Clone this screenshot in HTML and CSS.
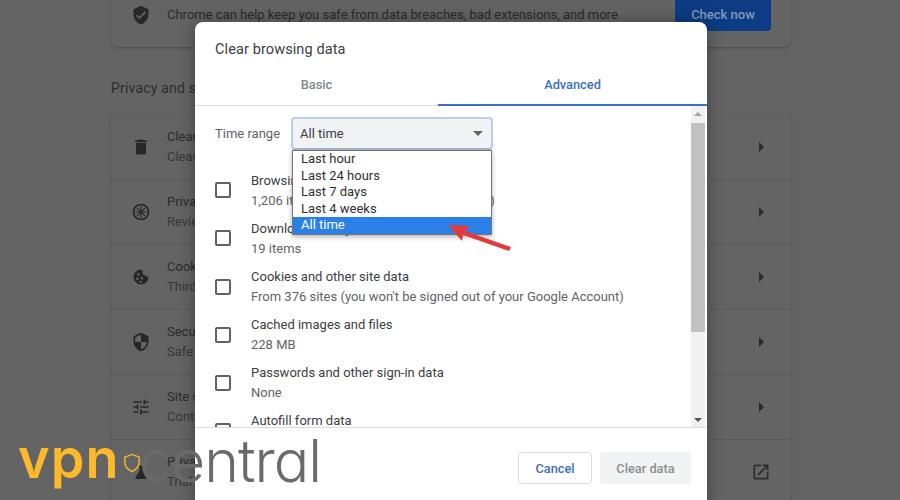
FILE: index.html
```html
<!DOCTYPE html>
<html lang="en">
<head>
<meta charset="utf-8">
<title>Clear browsing data</title>
<link rel="stylesheet" href="styles.css">
</head>
<body>
<main class="page">
  <section class="card">
    <div class="row">
      <svg class="icon" viewBox="0 0 24 24"><path d="M12 1L3 5v6c0 5.55 3.84 10.74 9 12 5.16-1.26 9-6.45 9-12V5l-9-4zm-2 16l-4-4 1.41-1.41L10 14.17l6.59-6.59L18 9l-8 8z"/></svg>
      <div class="row-text"><div class="line-main">Chrome can help keep you safe from data breaches, bad extensions, and more</div></div>
      <button class="check">Check now</button>
    </div>
  </section>
  <h2 class="section-title">Privacy and security</h2>
  <section class="card">
    <div class="row">
      <svg class="icon" viewBox="0 0 24 24"><path d="M6 19c0 1.1.9 2 2 2h8c1.1 0 2-.9 2-2V7H6v12zM19 4h-3.5l-1-1h-5l-1 1H5v2h14V4z"/></svg>
      <div class="row-text"><div class="line-main">Clear browsing data</div><div class="line-sub">Clear history, cookies, cache, and more</div></div>
      <span class="chev"></span>
    </div>
    <div class="row">
      <svg class="icon" viewBox="0 0 24 24"><path d="M12 2a10 10 0 1 0 0 20 10 10 0 0 0 0-20zm0 2a8 8 0 1 1 0 16 8 8 0 0 1 0-16z"/><path d="M11.3 5h1.4v14h-1.4zM5 11.3h14v1.4H5zM6.6 7.6l1-1 9.8 9.8-1 1zM6.6 16.4l9.8-9.8 1 1-9.8 9.8z"/></svg>
      <div class="row-text"><div class="line-main">Privacy review</div><div class="line-sub">Review key privacy and security controls</div></div>
      <span class="chev"></span>
    </div>
    <div class="row">
      <svg class="icon" viewBox="0 0 24 24"><path fill-rule="evenodd" d="M12 3a9 9 0 1 0 9 9c0-.5-.6-.9-1.200-.7-1.300.4-2.600-.4-2.800-1.700-1.400.2-2.700-.8-3-2.200-.1-.6-.1-1.200.1-1.700C14.400 4.900 13.300 3 12 3zM9 7.500a1.500 1.500 0 1 1 0 3 1.500 1.500 0 0 1 0-3zM7.500 12.500a1.500 1.500 0 1 1 0 3 1.500 1.500 0 0 1 0-3zM13 12a1.500 1.500 0 1 1 0 3 1.500 1.500 0 0 1 0-3zM11.500 16.500a1.300 1.300 0 1 1 0 2.600 1.300 1.300 0 0 1 0-2.600z"/></svg>
      <div class="row-text"><div class="line-main">Cookies and other site data</div><div class="line-sub">Third-party cookies are blocked in Incognito mode</div></div>
      <span class="chev"></span>
    </div>
    <div class="row">
      <svg class="icon" viewBox="0 0 24 24"><path d="M12 1L3 5v6c0 5.55 3.84 10.74 9 12 5.16-1.26 9-6.45 9-12V5l-9-4zm0 10.99h7c-.53 4.12-3.28 7.79-7 8.94V12H5V6.300l7-3.110v8.800z"/></svg>
      <div class="row-text"><div class="line-main">Security</div><div class="line-sub">Safe Browsing (protection from dangerous sites) and other settings</div></div>
      <span class="chev"></span>
    </div>
    <div class="row">
      <svg class="icon" viewBox="0 0 24 24"><path d="M3 17v2h6v-2H3zM3 5v2h10V5H3zm10 16v-2h8v-2h-8v-2h-2v6h2zM7 9v2H3v2h4v2h2V9H7zm14 4v-2H11v2h10zm-6-4h2V7h4V5h-4V3h-2v6z"/></svg>
      <div class="row-text"><div class="line-main">Site settings</div><div class="line-sub">Controls what information sites can use and show</div></div>
      <span class="chev"></span>
    </div>
    <div class="row">
      <svg class="icon icon-flask" viewBox="0 0 24 24"><path d="M9 3h6v2h-1v5l6 10c.5 1-.2 2-1.200 2H5.200C4.200 22 3.500 21 4 20l6-10V5H9z"/></svg>
      <div class="row-text"><div class="line-main">Privacy Sandbox</div><div class="line-sub">Trial features are on</div></div>
      <svg class="ext" viewBox="0 0 24 24"><path d="M19 19H5V5h7V3H5c-1.110 0-2 .9-2 2v14c0 1.100.89 2 2 2h14c1.100 0 2-.9 2-2v-7h-2v7zM14 3v2h3.590l-9.830 9.830 1.410 1.410L19 6.410V10h2V3h-7z"/></svg>
    </div>
  </section>
</main>

<div class="modal">
  <h1 class="modal-title">Clear browsing data</h1>
  <div class="tabs">
    <div class="tab">Basic</div>
    <div class="tab tab-active">Advanced</div>
  </div>
  <div class="scroller">
    <div class="scroll-content">
      <div class="range">
        <span class="range-label">Time range</span>
        <div class="select">All time<span class="select-caret"></span></div>
      </div>
      <div class="item"><span class="box"></span><div class="item-text"><div class="item-title">Browsing history</div><div class="item-sub">1,206 items (and more on synced devices)</div></div></div>
      <div class="item"><span class="box"></span><div class="item-text"><div class="item-title">Download history</div><div class="item-sub">19 items</div></div></div>
      <div class="item"><span class="box"></span><div class="item-text"><div class="item-title">Cookies and other site data</div><div class="item-sub">From 376 sites (you won't be signed out of your Google Account)</div></div></div>
      <div class="item"><span class="box"></span><div class="item-text"><div class="item-title">Cached images and files</div><div class="item-sub">228 MB</div></div></div>
      <div class="item"><span class="box"></span><div class="item-text"><div class="item-title">Passwords and other sign-in data</div><div class="item-sub">None</div></div></div>
      <div class="item"><span class="box"></span><div class="item-text"><div class="item-title">Autofill form data</div><div class="item-sub">None</div></div></div>
    </div>
    <div class="scrollbar">
      <span class="sb-up"></span>
      <span class="sb-thumb"></span>
      <span class="sb-down"></span>
    </div>
  </div>
  <div class="footer">
    <button class="btn btn-cancel">Cancel</button>
    <button class="btn btn-clear">Clear data</button>
  </div>
</div>

<ul class="dropdown">
  <li>Last hour</li>
  <li>Last 24 hours</li>
  <li>Last 7 days</li>
  <li>Last 4 weeks</li>
  <li class="selected">All time</li>
</ul>

<svg class="arrow" viewBox="0 0 70 36" width="70" height="36"><path d="M0 3 L22 4 L17 9 L63 25 L61 29 L15 13 L14 19 Z" fill="#e2393b"/></svg>

<div class="logo">
  <span class="logo-vpn">vpn</span>
  <svg class="logo-shield" viewBox="0 0 20 22"><path d="M10 1.500 L18 4.500 V10 C18 15 14.500 18.500 10 20.500 C5.500 18.500 2 15 2 10 V4.500 Z" fill="none" stroke="#fdb92c" stroke-width="1.600"/></svg>
  <span class="logo-central">central</span>
</div>
</body>
</html>
```
FILE: styles.css
```css
* { box-sizing: border-box; }
html, body { margin: 0; height: 500px; overflow: hidden; }
body { background: #646464; font-family: Roboto, "Liberation Sans", sans-serif; color: #2b2b2b; }

.page { width: 680px; margin: -18px 0 0 111px; display: flex; flex-direction: column; }
.card { background: #646464; border-radius: 8px; box-shadow: 0 1px 3px rgba(0,0,0,.25); }
.section-title { margin: 0; height: 67px; padding-top: 33px; font-size: 14px; line-height: 16px; font-weight: 400; color: #2d2d2d; letter-spacing: .2px; }
.row { height: 65px; padding: 0 20px; display: flex; align-items: center; gap: 16px; border-top: 1px solid #5a5a5a; }
.row:first-child { border-top: 0; }
.icon { width: 20px; height: 20px; fill: #272727; flex: none; }
.icon-flask { transform: scale(.85); }
.row-text { flex: 1; min-width: 0; font-size: 13px; line-height: 20px; white-space: nowrap; }
.line-main { color: #2b2b2b; }
.line-sub { color: #383838; }
.check { width: 96px; height: 33px; border: 0; border-radius: 4px; background: #0d3c85; color: #8199bd; font: 500 13px Roboto, sans-serif; flex: none; }
.chev { width: 0; height: 0; margin-right: 7px; border-left: 5px solid #2b2b2b; border-top: 5px solid transparent; border-bottom: 5px solid transparent; flex: none; }
.ext { width: 20px; height: 20px; fill: #2b2b2b; flex: none; }

.modal { position: absolute; left: 195px; top: 22px; width: 512px; height: 490px; background: #fff; border-radius: 8px; box-shadow: 0 0 18px rgba(0,0,0,.35); display: flex; flex-direction: column; }
.modal-title { margin: 0; padding: 19px 20px 0; height: 42px; font-size: 14.5px; line-height: 18px; font-weight: 400; color: #3c4043; letter-spacing: .1px; }
.tabs { display: grid; grid-template-columns: 243px 1fr; height: 42px; border-bottom: 1px solid #dadce0; }
.tab { display: flex; align-items: center; justify-content: center; padding-bottom: 2px; font-size: 12.8px; font-weight: 500; color: #80868b; }
.tab-active { color: #3b6fc4; padding-bottom: 0; border-bottom: 2px solid #3b6fc4; height: 42px; }

.scroller { height: 322px; display: flex; overflow: hidden; border-bottom: 1px solid #dadce0; flex: none; }
.scroll-content { flex: 1; min-width: 0; padding: 11px 0 0 20px; overflow: hidden; }
.range { display: flex; align-items: center; gap: 11px; margin-bottom: 16px; }
.range-label { font-size: 13px; color: #5f6368; width: 65px; flex: none; white-space: nowrap; }
.select { width: 202px; height: 33px; padding: 0 7px; display: flex; align-items: center; justify-content: space-between; background: #f1f3f4; border: 2px solid #bccfe9; border-bottom-color: #a9b9d0; border-radius: 4px; font-size: 13px; color: #3c4043; flex: none; }
.select-caret { width: 0; height: 0; margin-right: 1px; border-top: 5px solid #5f6368; border-left: 5px solid transparent; border-right: 5px solid transparent; }
.item { height: 48px; display: flex; align-items: center; gap: 20px; }
.item:nth-child(n+4) .box { margin-top: 2px; }
.item-text { padding-top: 2px; }
.box { width: 16px; height: 16px; border: 2px solid #5f6368; border-radius: 2px; flex: none; }
.item-title { font-size: 13px; line-height: 20px; color: #3c4043; white-space: nowrap; }
.item-sub { font-size: 13px; line-height: 20px; color: #5f6368; white-space: nowrap; }

.scrollbar { width: 14px; margin-right: 2px; background: #f1f1f1; display: flex; flex-direction: column; align-items: stretch; flex: none; }
.sb-up, .sb-down { height: 17px; flex: none; position: relative; }
.sb-up::after, .sb-down::after { content: ""; position: absolute; left: 3px; width: 0; height: 0; border-left: 4px solid transparent; border-right: 4px solid transparent; }
.sb-up::after { top: 6px; border-bottom: 4px solid #a3a3a3; }
.sb-down::after { bottom: 5px; border-top: 4px solid #505050; }
.sb-thumb { height: 209px; background: #c1c1c1; }
.sb-down { margin-top: auto; }

.footer { padding: 24px 16px 0 0; display: flex; justify-content: flex-end; gap: 8px; }
.btn { height: 32px; border-radius: 4px; font: 500 12.8px Roboto, sans-serif; padding: 0; }
.btn-cancel { width: 74px; background: #fff; border: 1px solid #dadce0; color: #3b6fc4; }
.btn-clear { width: 91px; background: #f1f3f4; border: 0; color: #8b8e92; }

.dropdown { position: absolute; left: 292px; top: 150px; width: 200px; height: 85px; margin: 0; padding: 0; list-style: none; background: #fff; border: 1px solid #767676; box-shadow: 0 2px 5px rgba(0,0,0,.3); font-size: 13px; color: #303030; }
.dropdown li { height: 16.5px; line-height: 16.5px; padding-left: 8px; }
.dropdown .selected { background: #2a80e6; color: #fff; }

.arrow { position: absolute; left: 448px; top: 222px; }

.logo { position: absolute; left: 20px; top: 425px; width: 310px; height: 70px; }
.logo-vpn { position: absolute; left: -2px; top: 2px; font: 600 54px/64px Inter, sans-serif; color: #fdb92c; letter-spacing: 1px; }
.logo-shield { position: absolute; left: 103px; top: 28px; width: 18px; height: 20px; }
.logo-central { position: absolute; right: 9px; top: 1px; font: 300 59px/70px Inter, sans-serif; font-feature-settings: "cv11"; color: #6a6a6a; letter-spacing: -1px; }
```
